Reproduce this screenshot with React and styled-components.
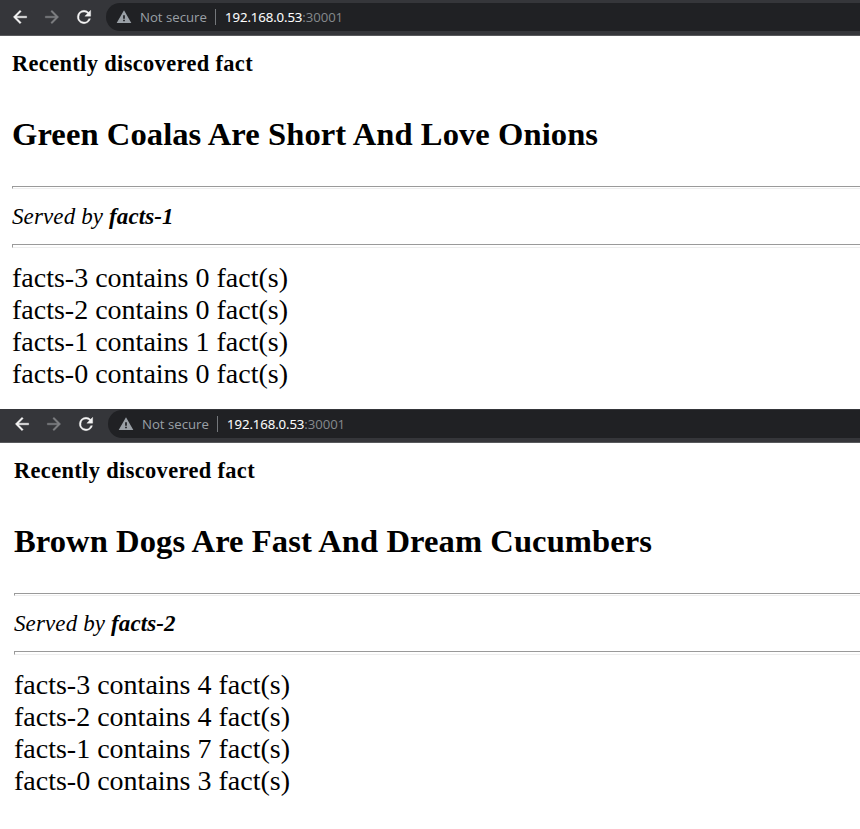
import React from 'react';
import styled, { createGlobalStyle } from 'styled-components';

const Global = createGlobalStyle`
  * { box-sizing: border-box; }
  body { margin: 0; background: #fff; overflow: hidden; }
`;
const Screen = styled.main`
  width: 860px;
  height: 829px;
  background: #fff;
  overflow: hidden;
  color: #000;
  font-family: "Liberation Serif", serif;
`;
const BrowserWindow = styled.section`
  height: ${p => p.$height}px;
  overflow: hidden;
`;
const Toolbar = styled.header`
  height: ${p => p.$height}px;
  padding-left: ${p => p.$shift}px;
  background: #35363a;
  border-bottom: 1px solid #58595c;
  display: flex;
  align-items: flex-start;
`;
const Navigation = styled.nav`
  display: flex;
  gap: 12px;
  width: 106px;
  padding: ${p => p.$top}px 0 0 10px;
  flex: none;
`;
const NavIcon = styled.svg`
  width: 20px;
  height: 20px;
  fill: ${p => p.$muted ? '#7e7f82' : '#f4f4f4'};
  stroke: ${p => p.$muted ? '#7e7f82' : '#f4f4f4'};
  stroke-width: 0.45;
`;
const AddressBar = styled.div`
  height: 28px;
  margin-top: ${p => p.$top}px;
  flex: 1;
  display: flex;
  align-items: center;
  padding-left: 10px;
  border-radius: 14px 0 0 14px;
  background: #202124;
  font: 13.2px "Open Sans", sans-serif;
  color: #9aa0a6;
  white-space: nowrap;
`;
const Warning = styled.svg`
  width: 16px;
  height: 16px;
  fill: #9aa0a6;
  margin-right: 8px;
`;
const Security = styled.span`
  width: 75px;
`;
const Divider = styled.span`
  width: 1px;
  height: 16px;
  background: #74777b;
  margin-right: 9px;
`;
const Host = styled.span`
  color: #fff;
  letter-spacing: -0.08px;
  -webkit-text-stroke: 0.1px #fff;
`;
const Port = styled.span`
  color: #85898d;
  letter-spacing: -0.06px;
`;
const Content = styled.article`
  padding-left: ${p => p.$left}px;
`;
const Eyebrow = styled.h2`
  margin: 0;
  padding-top: 14px;
  font-size: 22.4px;
  line-height: 27px;
  letter-spacing: 0.37px;
`;
const Fact = styled.h1`
  margin: 37px 0 0;
  font-size: 32.6px;
  line-height: 41px;
  letter-spacing: 0.07px;
`;
const Rule = styled.hr`
  margin: ${p => p.$top}px 0 0;
  height: ${p => p.$height}px;
  border: 1px solid;
  border-color: #9a9a9a #eee #eee #9a9a9a;
  border-right: 0;
`;
const Served = styled.p`
  margin: 14px 0 0;
  font-size: 23px;
  line-height: 28px;
  font-style: italic;
  letter-spacing: 0.12px;
`;
const Counts = styled.ul`
  list-style: none;
  margin: 14px 0 0;
  padding: 0;
  font-size: 28px;
  line-height: 32px;
`;

function BrowserView({ second, fact, server, counts }) {
  return <BrowserWindow $height={second ? 420 : 409}>
    <Toolbar $height={second ? 34 : 36} $shift={second ? 2 : 0}>
      <Navigation $top={second ? 5 : 7}>
        <NavIcon viewBox="0 0 24 24"><path d="M20 11H7.83l5.59-5.59L12 4l-8 8 8 8 1.41-1.41L7.83 13H20v-2z" /></NavIcon>
        <NavIcon $muted viewBox="0 0 24 24"><path d="m12 4-1.41 1.41L16.17 11H4v2h12.17l-5.58 5.59L12 20l8-8z" /></NavIcon>
        <NavIcon viewBox="0 0 24 24"><path d="M17.65 6.35A7.95 7.95 0 0 0 12 4a8 8 0 1 0 7.73 10h-2.08A6 6 0 1 1 12 6c1.66 0 3.14.69 4.22 1.78L13 11h7V4z" /></NavIcon>
      </Navigation>
      <AddressBar $top={second ? 1 : 3}>
        <Warning viewBox="0 0 24 24"><path d="M1 21h22L12 2 1 21zm12.3-2.5h-2.6V16h2.6v2.5zm0-4h-2.6V9.5h2.6v5z" /></Warning>
        <Security>Not secure</Security><Divider /><Host>192.168.0.53</Host><Port>:30001</Port>
      </AddressBar>
    </Toolbar>
    <Content $left={second ? 14 : 12}>
      <Eyebrow>Recently discovered fact</Eyebrow>
      <Fact>{fact}</Fact>
      <Rule $top={31} $height={3} />
      <Served>Served by <strong>{server}</strong></Served>
      <Rule $top={13} $height={4} />
      <Counts>{counts.map((count, i) => <li key={i}>facts-{3 - i} contains {count} fact(s)</li>)}</Counts>
    </Content>
  </BrowserWindow>;
}

export default function App() {
  return <><Global /><Screen>
    <BrowserView fact="Green Coalas Are Short And Love Onions" server="facts-1" counts={[0, 0, 1, 0]} />
    <BrowserView second fact="Brown Dogs Are Fast And Dream Cucumbers" server="facts-2" counts={[4, 4, 7, 3]} />
  </Screen></>;
}
